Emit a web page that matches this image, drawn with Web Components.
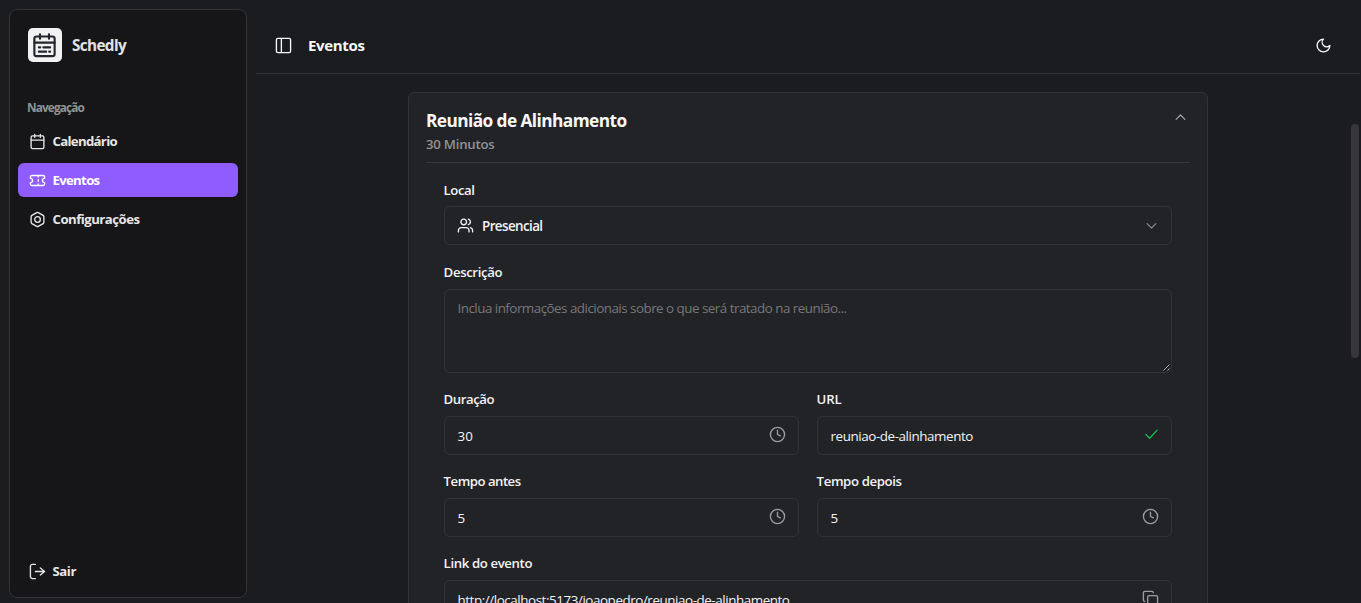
<!DOCTYPE html>
<html lang="pt-BR">
<head>
<meta charset="utf-8">
<title>Schedly</title>
<style>
html,body{margin:0;height:100%;overflow:hidden;background:#1b1c1f}
body{font-family:"Open Sans","Noto Sans",sans-serif;color:#ededef}
</style>
</head>
<body>
<schedly-app></schedly-app>
<script>
const ICONS = {
  calendar:'<path d="M8 2v4M16 2v4M3 10h18"/><rect x="3" y="4" width="18" height="18" rx="2"/>',
  ticket:'<path d="M2 9a3 3 0 0 1 0 6v2a2 2 0 0 0 2 2h16a2 2 0 0 0 2-2v-2a3 3 0 0 1 0-6V7a2 2 0 0 0-2-2H4a2 2 0 0 0-2 2ZM13 5v2M13 17v2M13 11v2"/>',
  bolt:'<path d="M21 16V8a2 2 0 0 0-1-1.73l-7-4a2 2 0 0 0-2 0l-7 4A2 2 0 0 0 3 8v8a2 2 0 0 0 1 1.73l7 4a2 2 0 0 0 2 0l7-4A2 2 0 0 0 21 16z"/><circle cx="12" cy="12" r="4"/>',
  logout:'<path d="M9 22H5a3 3 0 0 1-3-3V5a3 3 0 0 1 3-3h4M16 17l6-5-6-5M22 12H9"/>',
  panel:'<rect x="2" y="2" width="20" height="20" rx="2"/><path d="M9 2v20"/>',
  moon:'<path d="M12 3a6 6 0 0 0 9 9 9 9 0 1 1-9-9Z"/>',
  users:'<path d="M17 21v-2a4 4 0 0 0-4-4H6a4 4 0 0 0-4 4v2M16 3.13a4 4 0 0 1 0 7.75M22 21v-2a4 4 0 0 0-3-3.87"/><circle cx="9.5" cy="7" r="4"/>',
  up:'<path d="m5 15 7-7 7 7"/>',
  down:'<path d="m5 9 7 7 7-7"/>',
  clock:'<circle cx="12" cy="12" r="10"/><path d="M12 6v6l4 2"/>',
  check:'<path d="M21 5 9 18l-6-6"/>',
  copy:'<rect x="8" y="8" width="14" height="14" rx="2"/><path d="M4 16a2 2 0 0 1-2-2V4a2 2 0 0 1 2-2h10a2 2 0 0 1 2 2"/>',
  logo:'<rect x="3" y="4" width="18" height="17.5" rx="2"/><path d="M8 2v4M16 2v4M3 9.5h18M7 13.7h1.2M11 13.7h6M7 17.5h6.5M16.2 17.5h.8"/>'
};
class UiIcon extends HTMLElement{
  connectedCallback(){
    if(this.shadowRoot) return;
    this.attachShadow({mode:'open'}).innerHTML=`<style>:host{display:block;flex:none;width:var(--s,17px);height:var(--s,17px)}svg{display:block;width:100%;height:100%;fill:none;stroke:currentColor;stroke-width:var(--sw,1.9);stroke-linecap:round;stroke-linejoin:round}</style><svg viewBox="0 0 24 24">${ICONS[this.getAttribute('name')]}</svg>`;
  }
}
/* Text whose tracking is adjusted so that the line takes the given measure. */
class UiText extends HTMLElement{
  connectedCallback(){
    if(this.shadowRoot) return;
    this.attachShadow({mode:'open'}).innerHTML='<style>:host{display:block;white-space:nowrap}span{display:inline-block;letter-spacing:0}</style><span><slot></slot></span>';
    requestAnimationFrame(()=>this.fit());
  }
  fit(){
    const s=this.shadowRoot.querySelector('span'), w=+this.getAttribute('measure');
    const n=+this.getAttribute('count')||this.textContent.length;
    if(w) s.style.letterSpacing=((w-s.getBoundingClientRect().width)/n)+'px';
  }
}
class NavItem extends HTMLElement{
  connectedCallback(){
    if(this.shadowRoot) return;
    this.attachShadow({mode:'open'}).innerHTML=`<style>:host{display:flex;align-items:center;gap:6.5px;height:34px;padding:0 11px;border-radius:6px;font-size:13.2px;font-weight:700;color:#e6e6e7}:host([active]){background:#8e5cff;color:#fff}</style><ui-icon name="${this.getAttribute('icon')}"></ui-icon><slot></slot>`;
  }
}
class SideBar extends HTMLElement{
  connectedCallback(){
    if(this.shadowRoot) return;
    this.attachShadow({mode:'open'}).innerHTML=`<style>
:host{display:flex;flex-direction:column;box-sizing:border-box;width:238px;height:589px;margin:9px;border:1px solid #323337;border-radius:8px;background:#161618;padding:18px 8px 9px;flex:none}
.brand{display:flex;align-items:center;gap:10px;padding-left:10px;height:34px;font-size:15.3px;font-weight:700;color:#e2e2e3}
.logo{display:flex;align-items:center;box-sizing:border-box;padding-left:3px;width:34px;height:34px;border-radius:5px;background:#f2f2f2;color:#24262d;--s:27px;--sw:1.9}
.cap{font-size:11.8px;font-weight:700;color:#929294;margin:37px 0 0 9px;height:17px;line-height:17px}
nav{display:flex;flex-direction:column;gap:5px;margin-top:8px}
.end{margin-top:auto}
</style>
<div class="brand"><div class="logo"><ui-icon name="logo"></ui-icon></div><ui-text measure="54">Schedly</ui-text></div>
<ui-text class="cap" measure="57">Navegação</ui-text>
<nav><nav-item icon="calendar"><ui-text measure="64.5">Calendário</ui-text></nav-item><nav-item icon="ticket" active><ui-text measure="47">Eventos</ui-text></nav-item><nav-item icon="bolt"><ui-text measure="87">Configurações</ui-text></nav-item></nav>
<nav-item class="end" icon="logout"><ui-text measure="23.5">Sair</ui-text></nav-item>`;
  }
}
class TopBar extends HTMLElement{
  connectedCallback(){
    if(this.shadowRoot) return;
    this.attachShadow({mode:'open'}).innerHTML=`<style>:host{display:flex;align-items:center;box-sizing:border-box;height:74px;margin-right:1px;padding:18px 28px 0 19px;border-bottom:1px solid #323337;font-size:15px;font-weight:700;color:#f8f8f8}ui-text{margin:0 0 2px 16px;flex:1}</style><ui-icon name="panel"></ui-icon><ui-text measure="56.5">Eventos</ui-text><ui-icon name="moon"></ui-icon>`;
  }
}
class FormField extends HTMLElement{
  connectedCallback(){
    if(this.shadowRoot) return;
    const a=n=>this.getAttribute(n), icon=a('icon'), lead=a('lead');
    this.attachShadow({mode:'open'}).innerHTML=`<style>
:host{display:block;min-width:0}
.label{font-size:13.2px;font-weight:600;height:17px;line-height:17px;margin:0 0 8px -.4px;color:#f2f2f3}
.box{position:relative;display:flex;align-items:center;box-sizing:border-box;height:39px;border:1px solid #323337;border-radius:6px;padding:0 12px 0 12.5px;font-size:13.4px;color:#f4f4f5}
.box>ui-text{flex:1}
.lead{margin:0 8.5px 0 -1px}
.tail{color:#9d9d9f;margin-bottom:1.6px}
:host([tone=ok]) .tail{color:#12c658;--s:15px}
:host([tone=choice]) .box{font-weight:600;padding-right:12.5px}
:host([tone=choice]) .tail{--s:15px;color:#88888b;margin:0}
:host([tone=choice]) .label,:host([area]) .label{line-height:19px}
:host([area]) .label{margin-bottom:9px}
:host([area]) .box{height:84px;align-items:flex-start;padding-top:9px;color:#77777a}
.grip{position:absolute;right:1px;bottom:1px;width:7px;height:7px;color:#b5b5b7}
</style><ui-text class="label" measure="${a('lw')}">${a('label')}</ui-text>
<div class="box">${lead?`<ui-icon class="lead" name="${lead}"></ui-icon>`:''}<ui-text measure="${a('vw')}" count="${this.textContent.length}"><slot></slot></ui-text>${icon?`<ui-icon class="tail" name="${icon}"></ui-icon>`:''}${this.hasAttribute('area')?'<svg class="grip" viewBox="0 0 7 7" stroke="currentColor" stroke-width=".9"><path d="M.5 6.5l6-6M4.5 6.5l2-2"/></svg>':''}</div>`;
  }
}
class EventCard extends HTMLElement{
  connectedCallback(){
    if(this.shadowRoot) return;
    this.attachShadow({mode:'open'}).innerHTML=`<style>
:host{display:block;box-sizing:border-box;width:800px;height:640px;border:1px solid #323337;border-radius:6px;background:#222327;padding:17px}
header{display:flex;justify-content:space-between;height:52px;border-bottom:1px solid #36373b}
.t{font-size:17.3px;line-height:22px;font-weight:700;color:#f8f8f8}
.s{font-size:13.2px;line-height:18px;font-weight:600;color:#929294;margin-top:3px}
.chev{--s:15px;margin-right:2px;color:#a4a4a6}
.form{display:grid;grid-template-columns:1fr 1fr;gap:18px;padding:18px}
.wide{grid-column:1/-1}
</style>
<header><div><ui-text class="t" measure="200.5">Reunião de Alinhamento</ui-text><ui-text class="s" measure="68.5">30 Minutos</ui-text></div><ui-icon class="chev" name="up"></ui-icon></header>
<div class="form">
<form-field class="wide" label="Local" lw="31" vw="60.5" lead="users" icon="down" tone="choice">Presencial</form-field>
<form-field class="wide" area label="Descrição" lw="58.5" vw="389">Inclua informações adicionais sobre o que será tratado na reunião...</form-field>
<form-field label="Duração" lw="50.5" vw="15.5" icon="clock">30</form-field>
<form-field label="URL" lw="25" vw="142.5" icon="check" tone="ok">reuniao-de-alinhamento</form-field>
<form-field label="Tempo antes" lw="77" vw="7.5" icon="clock">5</form-field>
<form-field label="Tempo depois" lw="85" vw="7.5" icon="clock">5</form-field>
<form-field class="wide" label="Link do evento" lw="88.5" vw="332" icon="copy">http://localhost:5173/joaopedro/reuniao-de-alinhamento</form-field>
</div>`;
  }
}
class SchedlyApp extends HTMLElement{
  connectedCallback(){
    if(this.shadowRoot) return;
    this.attachShadow({mode:'open'}).innerHTML=`<style>
:host{display:flex;width:1361px;height:603px;overflow:hidden;background:#1b1c1f}
main{flex:1;min-width:0;height:603px;overflow:hidden}
.content{display:flex;padding:18px 2px 0 152px;height:511px;overflow:hidden}
.bar{width:8px;height:234px;border-radius:4px;background:#36363b;margin:32px 0 0 auto}
</style><side-bar></side-bar><main><top-bar></top-bar><div class="content"><event-card></event-card><div class="bar"></div></div></main>`;
  }
}
customElements.define('ui-icon',UiIcon);
customElements.define('ui-text',UiText);
customElements.define('nav-item',NavItem);
customElements.define('side-bar',SideBar);
customElements.define('top-bar',TopBar);
customElements.define('form-field',FormField);
customElements.define('event-card',EventCard);
customElements.define('schedly-app',SchedlyApp);
</script>
</body>
</html>
